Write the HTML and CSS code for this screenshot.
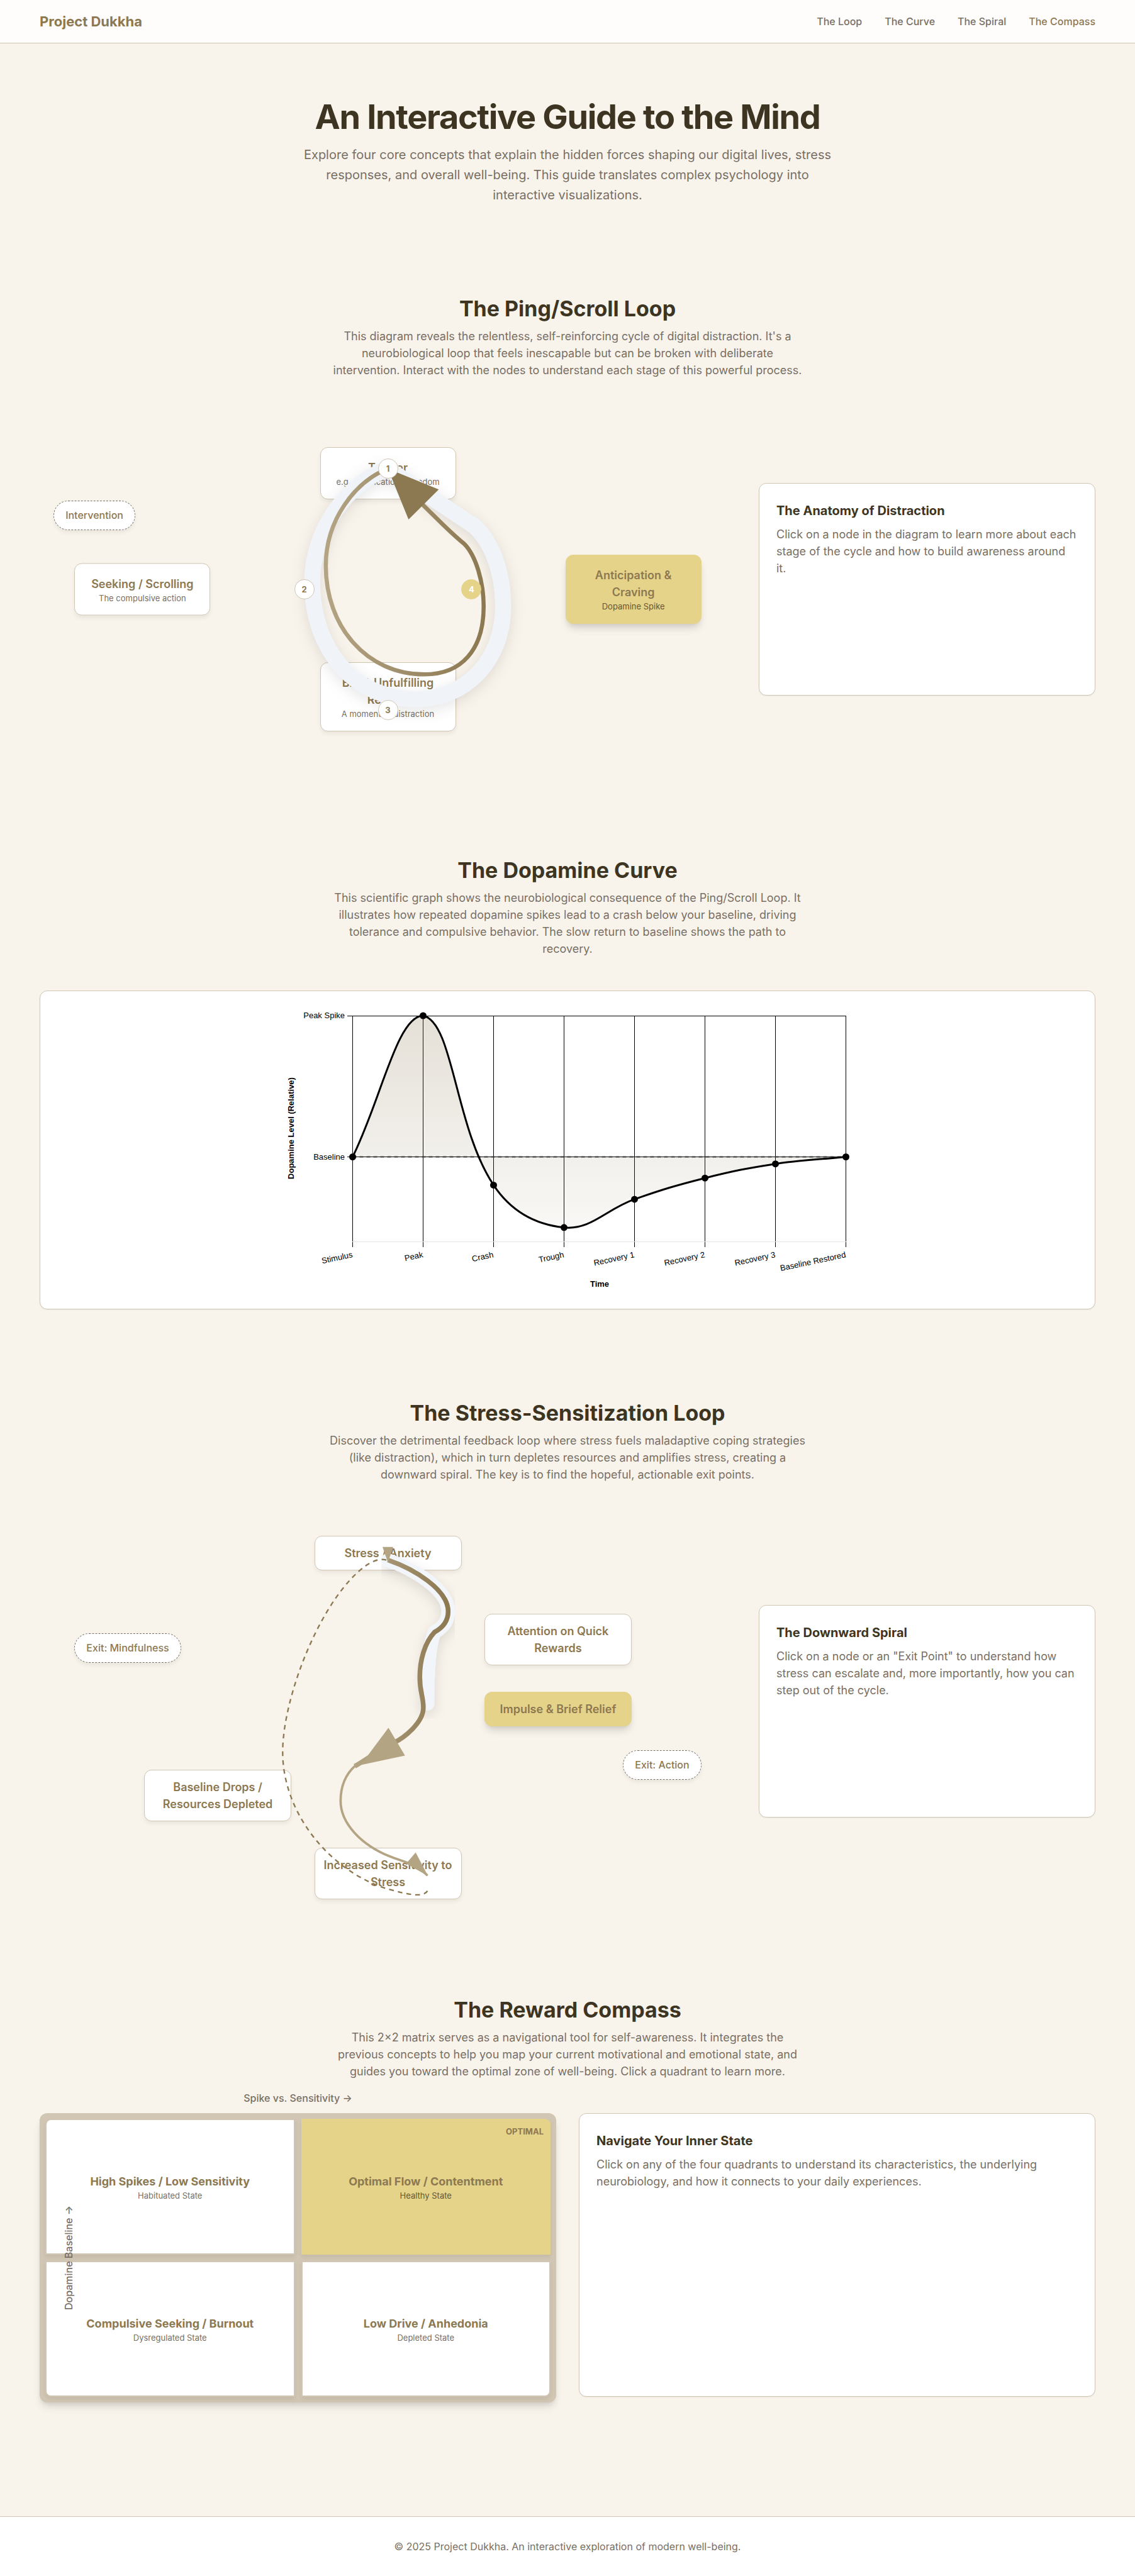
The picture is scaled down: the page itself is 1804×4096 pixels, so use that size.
FILE: index.html
```html
<!DOCTYPE html>
<html lang="en">
<head>
<meta charset="utf-8">
<meta name="viewport" content="width=device-width, initial-scale=1">
<title>Project Dukkha</title>
<link rel="stylesheet" href="styles.css">
</head>
<body>
<header class="site-header">
  <a class="logo" href="#top">Project Dukkha</a>
  <nav class="nav">
    <a href="#loop">The Loop</a>
    <a href="#curve">The Curve</a>
    <a href="#spiral">The Spiral</a>
    <a class="active" href="#compass">The Compass</a>
  </nav>
</header>

<main id="top">
  <section class="hero">
    <h1>An Interactive Guide to the Mind</h1>
    <p>Explore four core concepts that explain the hidden forces shaping our digital lives, stress responses, and overall well-being. This guide translates complex psychology into interactive visualizations.</p>
  </section>

  <section class="section" id="loop">
    <div class="intro">
      <h2>The Ping/Scroll Loop</h2>
      <p>This diagram reveals the relentless, self-reinforcing cycle of digital distraction. It's a neurobiological loop that feels inescapable but can be broken with deliberate intervention. Interact with the nodes to understand each stage of this powerful process.</p>
    </div>
    <div class="split">
      <div class="diagram diagram-loop">
        <button class="node trigger" type="button"><span class="node-title">Trigger</span><span class="node-sub">e.g., Notification, Boredom</span></button>
        <button class="node craving highlight" type="button"><span class="node-title">Anticipation &amp; Craving</span><span class="node-sub">Dopamine Spike</span></button>
        <button class="node seeking" type="button"><span class="node-title">Seeking / Scrolling</span><span class="node-sub">The compulsive action</span></button>
        <button class="node reward" type="button"><span class="node-title">Brief, Unfulfilling Reward</span><span class="node-sub">A moment of distraction</span></button>
        <button class="pill intervention" type="button">Intervention</button>
        <svg class="paths" viewBox="67 697 1178 600" aria-hidden="true">
          <defs>
            <linearGradient id="loop-line" gradientUnits="userSpaceOnUse" x1="551" y1="0" x2="818" y2="0">
              <stop offset="0" stop-color="#b3a484"/><stop offset="1" stop-color="#8c7851"/>
            </linearGradient>
          </defs>
          <path class="ring" d="M656,793 C590,815 528,895 528,985 C528,1100 600,1183 703,1183 C790,1183 851,1115 851,1026 C851,965 830,915 802,890 L656,793"/>
          <path d="M656,793 C600,815 551,880 551,957 C551,1060 620,1141 718,1141 C780,1141 818,1100 818,1026 C818,985 805,940 785,920 C760,900 735,873 712,851" fill="none" stroke="url(#loop-line)" stroke-width="7"/>
          <path d="M656,793 L742,828 L691,879 Z" fill="#8c7851"/>
        </svg>
        <span class="badge badge-top">1</span>
        <span class="badge badge-left">2</span>
        <span class="badge badge-bottom">3</span>
        <span class="badge badge-right">4</span>
      </div>
      <aside class="panel">
        <h3>The Anatomy of Distraction</h3>
        <p>Click on a node in the diagram to learn more about each stage of the cycle and how to build awareness around it.</p>
      </aside>
    </div>
  </section>

  <section class="section" id="curve">
    <div class="intro">
      <h2>The Dopamine Curve</h2>
      <p>This scientific graph shows the neurobiological consequence of the Ping/Scroll Loop. It illustrates how repeated dopamine spikes lead to a crash below your baseline, driving tolerance and compulsive behavior. The slow return to baseline shows the path to recovery.</p>
    </div>
    <div class="chart-card">
      <svg class="chart" viewBox="0 0 902 505" role="img" aria-label="Dopamine level over time">
        <defs>
          <linearGradient id="area" gradientUnits="userSpaceOnUse" x1="0" y1="39" x2="0" y2="399">
            <stop offset="0" stop-color="#8c7851" stop-opacity="0.23"/><stop offset="1" stop-color="#8c7851" stop-opacity="0.04"/>
          </linearGradient>
        </defs>
        <path class="grid" d="M101,39.5H894 M101,263.5H894 M109.5,39V407 M221.5,39V407 M333.5,39V407 M445.5,39V407 M557.5,39V407 M669.5,39V407 M781.5,39V407 M893.5,39V407"/>
        <path class="axis" d="M109,398.5H894"/>
        <path fill="url(#area)" d="M109.5,263.5 C154.3,173.7 180.1,39 221.5,39 C269.7,48.7 271.6,215.3 333.5,308.4 C361.2,350.1 398.9,371.1 445.5,375.8 C488.5,380.1 512,346.9 557.5,330.9 C601.6,315.4 624.2,308.6 669.5,297.2 C713.8,286.1 736.4,281.5 781.5,274.7 C826,268 848.7,268 893.5,263.5 Z"/>
        <path class="baseline" d="M109.5,263.5H893.5"/>
        <path class="curve" d="M109.5,263.5 C154.3,173.7 180.1,39 221.5,39 C269.7,48.7 271.6,215.3 333.5,308.4 C361.2,350.1 398.9,371.1 445.5,375.8 C488.5,380.1 512,346.9 557.5,330.9 C601.6,315.4 624.2,308.6 669.5,297.2 C713.8,286.1 736.4,281.5 781.5,274.7 C826,268 848.7,268 893.5,263.5"/>
        <g>
          <circle cx="109.5" cy="263.5" r="5.5"/><circle cx="221.5" cy="39" r="5.5"/><circle cx="333.5" cy="308.4" r="5.5"/><circle cx="445.5" cy="375.8" r="5.5"/>
          <circle cx="557.5" cy="330.9" r="5.5"/><circle cx="669.5" cy="297.2" r="5.5"/><circle cx="781.5" cy="274.7" r="5.5"/><circle cx="893.5" cy="263.5" r="5.5"/>
        </g>
        <g class="ticks">
          <text x="97" y="43">Peak Spike</text>
          <text x="97" y="268">Baseline</text>
          <text transform="translate(110 423) rotate(-12)">Stimulus</text>
          <text transform="translate(222 423) rotate(-12)">Peak</text>
          <text transform="translate(334 423) rotate(-12)">Crash</text>
          <text transform="translate(446 423) rotate(-12)">Trough</text>
          <text transform="translate(558 423) rotate(-12)">Recovery 1</text>
          <text transform="translate(670 423) rotate(-12)">Recovery 2</text>
          <text transform="translate(782 423) rotate(-12)">Recovery 3</text>
          <text transform="translate(894 423) rotate(-12)">Baseline Restored</text>
        </g>
        <g class="axis-title">
          <text x="502" y="470">Time</text>
          <text transform="translate(16 218) rotate(-90)">Dopamine Level (Relative)</text>
        </g>
      </svg>
    </div>
  </section>

  <section class="section" id="spiral">
    <div class="intro">
      <h2>The Stress-Sensitization Loop</h2>
      <p>Discover the detrimental feedback loop where stress fuels maladaptive coping strategies (like distraction), which in turn depletes resources and amplifies stress, creating a downward spiral. The key is to find the hopeful, actionable exit points.</p>
    </div>
    <div class="split">
      <div class="diagram diagram-spiral">
        <button class="node stress" type="button"><span class="node-title">Stress / Anxiety</span></button>
        <button class="node attention" type="button"><span class="node-title">Attention on Quick Rewards</span></button>
        <button class="node impulse highlight" type="button"><span class="node-title">Impulse &amp; Brief Relief</span></button>
        <button class="node depleted" type="button"><span class="node-title">Baseline Drops / Resources Depleted</span></button>
        <button class="node sensitivity" type="button"><span class="node-title">Increased Sensitivity to Stress</span></button>
        <button class="pill mindfulness" type="button">Exit: Mindfulness</button>
        <button class="pill action" type="button">Exit: Action</button>
        <svg class="paths" viewBox="67 2566 1178 660" aria-hidden="true">
          <defs>
            <linearGradient id="spiral-line" gradientUnits="userSpaceOnUse" x1="600" y1="0" x2="758" y2="0">
              <stop offset="0" stop-color="#b3a484"/><stop offset="1" stop-color="#8c7851"/>
            </linearGradient>
            <filter id="glow" filterUnits="userSpaceOnUse" x="645" y="2615" width="124" height="293">
              <feDropShadow dx="0" dy="8" stdDeviation="10" flood-color="#000" flood-opacity="0.12"/>
            </filter>
          </defs>
          <path d="M656,2640 C700,2655 758,2690 758,2727 C758,2745 748,2755 735,2762 C725,2785 723,2830 723,2883" fill="none" stroke="#f2f5f9" stroke-width="23" stroke-linecap="round" filter="url(#glow)"/>
          <path d="M656,2640 C700,2655 758,2690 758,2727 C758,2745 748,2755 735,2762 C718,2780 710,2810 710,2838 C710,2865 716,2870 716,2890 C716,2915 685,2940 665,2950 C640,2962 620,2978 600,2989" fill="none" stroke="url(#spiral-line)" stroke-width="8"/>
          <path d="M610,2987 L657,2924 L685,2971 Z" fill="#b3a484"/>
          <path d="M601,2988 C583,3004 576,3026 576,3048 C576,3085 610,3122 660,3142 C685,3152 700,3152 723,3174" fill="none" stroke="#b3a484" stroke-width="4"/>
          <path d="M724,3175 L703,3135 L687,3154 Z" fill="#b3a484"/>
          <path d="M723,3200 C716,3212 690,3206 660,3198 C560,3170 478,3070 478,2965 C478,2870 545,2700 621,2648 C632,2641 645,2636 656,2641" fill="none" stroke="#8c7851" stroke-width="2.5" stroke-dasharray="8 7"/>
          <path d="M656,2644 L647,2618 L665,2618 Z" fill="#b3a484"/>
        </svg>
      </div>
      <aside class="panel">
        <h3>The Downward Spiral</h3>
        <p>Click on a node or an "Exit Point" to understand how stress can escalate and, more importantly, how you can step out of the cycle.</p>
      </aside>
    </div>
  </section>

  <section class="section" id="compass">
    <div class="intro">
      <h2>The Reward Compass</h2>
      <p>This 2×2 matrix serves as a navigational tool for self-awareness. It integrates the previous concepts to help you map your current motivational and emotional state, and guides you toward the optimal zone of well-being. Click a quadrant to learn more.</p>
    </div>
    <div class="compass">
      <div class="matrix">
        <span class="axis-x">Spike vs. Sensitivity →</span>
        <button class="cell cell-tl" type="button"><span class="cell-title">High Spikes / Low Sensitivity</span><span class="node-sub">Habituated State</span></button>
        <button class="cell cell-tr highlight" type="button"><span class="tag">OPTIMAL</span><span class="cell-title">Optimal Flow / Contentment</span><span class="node-sub">Healthy State</span></button>
        <button class="cell cell-bl" type="button"><span class="cell-title">Compulsive Seeking / Burnout</span><span class="node-sub">Dysregulated State</span></button>
        <button class="cell cell-br" type="button"><span class="cell-title">Low Drive / Anhedonia</span><span class="node-sub">Depleted State</span></button>
        <span class="axis-y">Dopamine Baseline →</span>
      </div>
      <aside class="panel panel-tall">
        <h3>Navigate Your Inner State</h3>
        <p>Click on any of the four quadrants to understand its characteristics, the underlying neurobiology, and how it connects to your daily experiences.</p>
      </aside>
    </div>
  </section>
</main>

<footer class="site-footer">
  <p>© 2025 Project Dukkha. An interactive exploration of modern well-being.</p>
</footer>
</body>
</html>
```

FILE: styles.css
```css
:root {
  --bg: #f8f4ec;
  --ink: #3d3522;
  --accent: #8c7851;
  --muted: #786f64;
  --line: #d1c5b3;
  --gold: #e6d38a;
}

* { box-sizing: border-box; }

body {
  margin: 0;
  background: var(--bg);
  color: var(--muted);
  font: 18px/27px Inter, sans-serif;
}

h1, h2, h3, p { margin: 0; }
a { color: inherit; text-decoration: none; }
button { font: inherit; color: inherit; cursor: pointer; }

.site-header {
  display: flex;
  justify-content: space-between;
  align-items: center;
  min-height: 69px;
  padding: 0 63px;
  background: #fffdfc;
  border-bottom: 1px solid var(--line);
}
.logo { font-size: 22px; font-weight: 700; color: var(--accent); }
.nav { display: flex; gap: 36px; font-size: 16px; font-weight: 500; }
.nav .active { color: var(--accent); }

.hero { padding: 84px 63px 72px; text-align: center; }
h1 {
  margin-bottom: 12px;
  color: var(--ink);
  font-size: 54px;
  line-height: 65px;
  letter-spacing: -0.025em;
}
.hero p { max-width: 864px; margin: 0 auto; font-size: 20px; line-height: 32px; }

.section { padding: 72px 63px; }
.intro { max-width: 756px; margin: 0 auto 53px; text-align: center; }
h2 { margin-bottom: 10px; color: var(--ink); font-size: 34px; line-height: 41px; }

.split {
  display: grid;
  grid-template-columns: minmax(0, 1fr) 535px;
  gap: 36px;
  align-items: center;
}
.diagram { position: relative; }
.diagram-loop { min-height: 564px; }
.diagram-spiral { min-height: 620px; }
.paths { position: absolute; inset: 0; width: 100%; height: 100%; pointer-events: none; }
.ring {
  fill: none;
  stroke: #f0f4f9;
  stroke-width: 27;
  stroke-linejoin: round;
  filter: drop-shadow(0 6px 12px rgba(0, 0, 0, 0.1));
}

.node {
  position: absolute;
  display: flex;
  flex-direction: column;
  align-items: center;
  background: #fff;
  border: 1px solid var(--line);
  border-radius: 12px;
  box-shadow: 0 4px 6px rgba(0, 0, 0, 0.06);
  text-align: center;
}
.diagram-loop .node { width: 216px; padding: 18px; }
.diagram-spiral .node { width: 234px; padding: 13px 4px; }
.node-title { color: var(--accent); font-weight: 600; }
.node-sub { font-size: 13px; line-height: 18px; }
.highlight {
  background: var(--gold);
  border-color: var(--gold);
  box-shadow: 0 9px 14px -3px rgba(0, 0, 0, 0.14), 0 4px 6px -2px rgba(0, 0, 0, 0.06);
}
.highlight .node-sub { color: #655730; }

.trigger { top: 10%; left: 50%; transform: translateX(-50%); }
.reward { bottom: 10%; left: 50%; transform: translateX(-50%); }
.craving { right: 5%; top: 50%; transform: translateY(-50%); }
.seeking { left: 5%; top: 50%; transform: translateY(-50%); }
.intervention { left: 2%; top: 25%; }

.stress { top: 5%; left: 50%; transform: translateX(-50%); }
.attention { top: 25%; right: 15%; }
.diagram-spiral .attention { padding: 13px 30px; }
.impulse { top: 45%; right: 15%; }
.depleted { top: 65%; left: 15%; }
.diagram-spiral .depleted { padding: 13px 20px; }
.sensitivity { top: 85%; left: 50%; transform: translateX(-50%); }
.mindfulness { top: 30%; left: 5%; }
.action { top: 60%; right: 5%; }

.pill {
  position: absolute;
  padding: 11px 18px;
  background: #fff;
  border: 1px dashed var(--muted);
  border-radius: 24px;
  box-shadow: 0 4px 6px rgba(0, 0, 0, 0.06);
  color: var(--accent);
  font-size: 16px;
  font-weight: 500;
  line-height: 23px;
}

.badge {
  position: absolute;
  width: 32px;
  height: 32px;
  transform: translate(-50%, -50%);
  background: #fff;
  border: 1px solid var(--line);
  border-radius: 50%;
  color: var(--accent);
  font-size: 13px;
  font-weight: 700;
  line-height: 30px;
  text-align: center;
}
.badge-top { left: 50%; top: 16%; }
.badge-left { left: 38%; top: 50%; }
.badge-bottom { left: 50%; top: 84%; }
.badge-right { left: 62%; top: 50%; background: var(--gold); border-color: var(--gold); color: #fff; }

.panel {
  min-height: 338px;
  padding: 27px;
  background: #fff;
  border: 1px solid var(--line);
  border-radius: 12px;
  box-shadow: 0 1px 2px rgba(0, 0, 0, 0.06);
}
.panel h3 { margin-bottom: 8px; color: var(--ink); font-size: 20px; line-height: 32px; }
.panel-tall { min-height: 451px; }

.chart-card {
  background: #fff;
  border: 1px solid var(--line);
  border-radius: 12px;
  box-shadow: 0 1px 2px rgba(0, 0, 0, 0.06);
}
.chart { display: block; width: 902px; max-width: 100%; margin: 0 auto; }
.chart text { font-family: "Liberation Sans", Arial, sans-serif; font-size: 13px; fill: #000; }
.ticks text { text-anchor: end; }
.axis-title text { font-weight: 700; text-anchor: middle; }
.grid { stroke: #000; stroke-width: 1; }
.axis { stroke: #e5e5e5; stroke-width: 1; }
.baseline { stroke: #333; stroke-width: 2; stroke-dasharray: 6 5; }
.curve { fill: none; stroke: #000; stroke-width: 3; }

.compass {
  display: grid;
  grid-template-columns: repeat(2, minmax(0, 1fr));
  gap: 36px;
  align-items: start;
}
.matrix {
  position: relative;
  display: grid;
  grid-template-columns: repeat(2, minmax(0, 1fr));
  grid-auto-rows: 216px;
  gap: 10px;
  padding: 9px;
  background: var(--line);
  border-radius: 12px;
  box-shadow: 0 9px 14px -3px rgba(0, 0, 0, 0.14), 0 4px 6px -2px rgba(0, 0, 0, 0.06);
}
.cell {
  position: relative;
  display: flex;
  flex-direction: column;
  align-items: center;
  justify-content: center;
  background: #fff;
  border: 2px solid var(--line);
  box-shadow: 0 4px 6px rgba(0, 0, 0, 0.06);
}
.cell.highlight { background: var(--gold); border-color: var(--gold); }
.cell-tl { border-top-left-radius: 9px; }
.cell-tr { border-top-right-radius: 9px; }
.cell-bl { border-bottom-left-radius: 9px; }
.cell-br { border-bottom-right-radius: 9px; }
.cell-title { color: var(--accent); font-weight: 700; }
.tag {
  position: absolute;
  top: 9px;
  right: 9px;
  color: var(--accent);
  font-size: 13px;
  font-weight: 700;
  line-height: 18px;
}
.axis-x, .axis-y { position: absolute; font-size: 16px; font-weight: 500; line-height: 24px; white-space: nowrap; }
.axis-x { top: -36px; left: 50%; transform: translateX(-50%); }
.axis-y { top: 50%; left: 46px; transform: translate(-50%, -50%) rotate(-90deg); }

.site-footer {
  margin-top: 109px;
  padding: 35px 63px;
  background: #fff;
  border-top: 1px solid var(--line);
  font-size: 16px;
  line-height: 24px;
  text-align: center;
}
```
